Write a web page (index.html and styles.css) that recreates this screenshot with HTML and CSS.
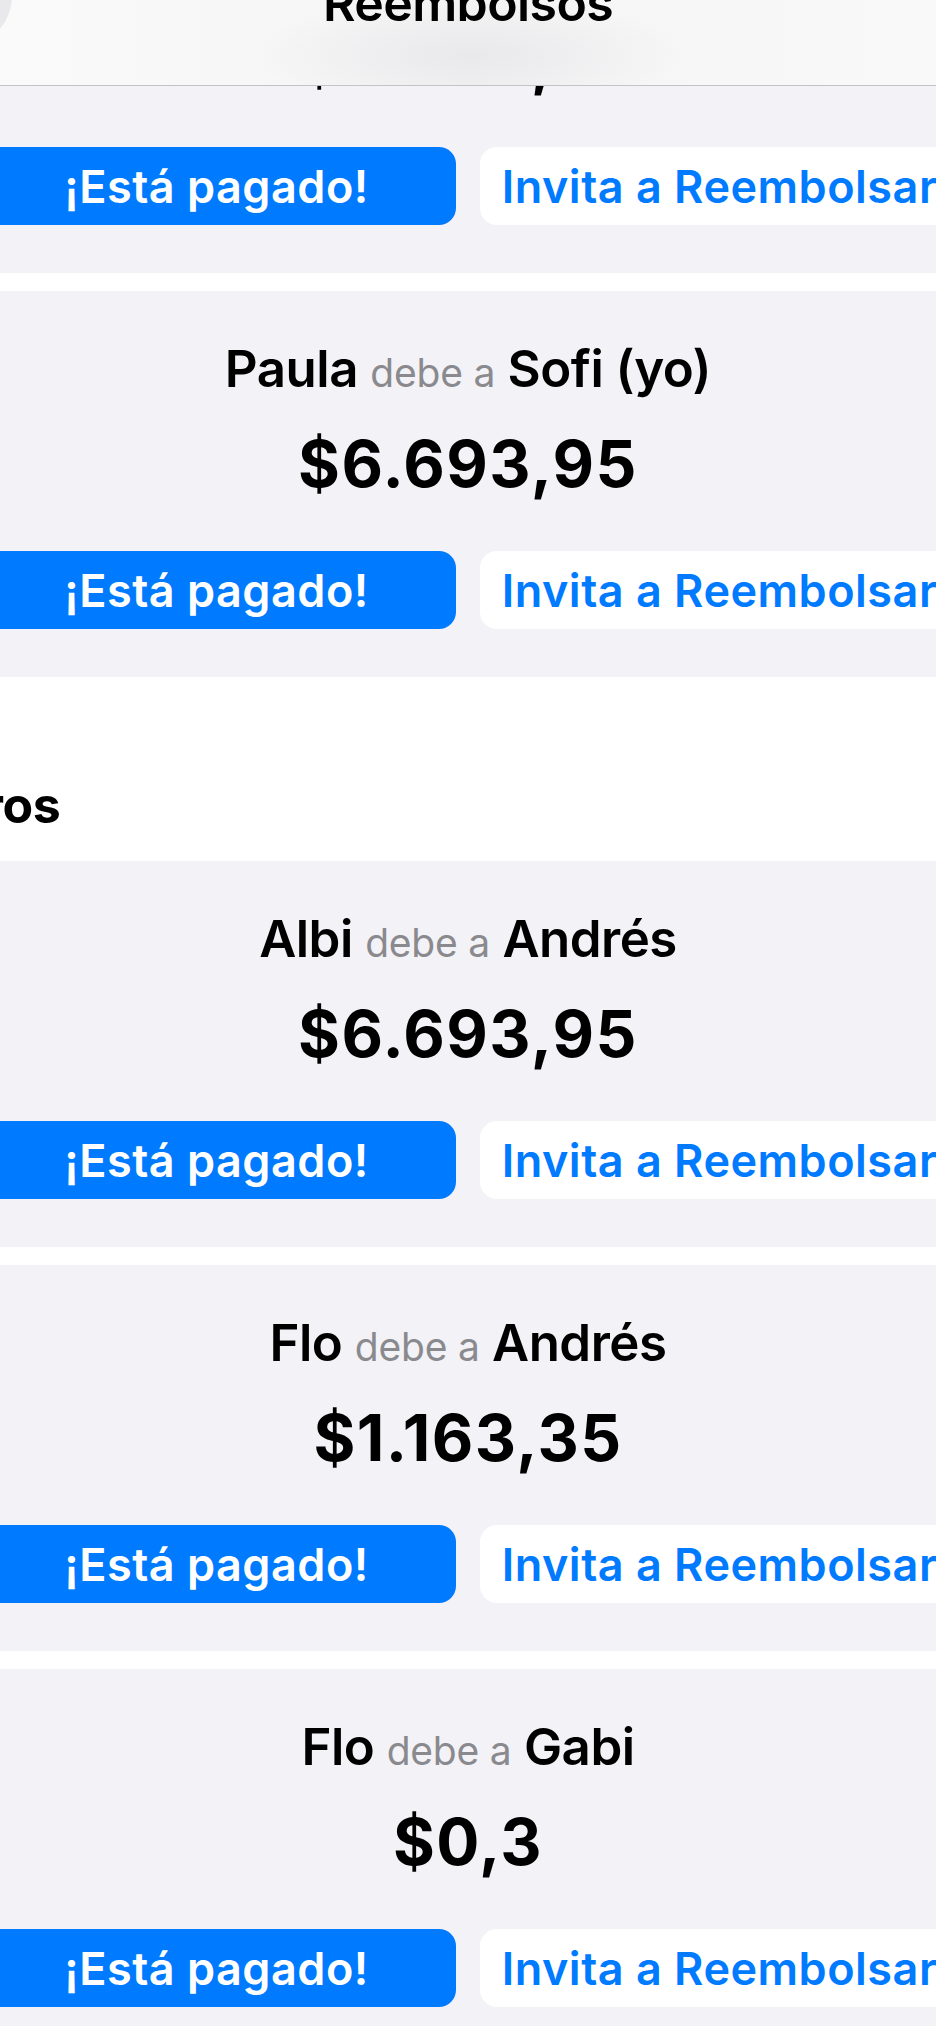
FILE: index.html
```html
<!DOCTYPE html>
<html lang="es">
<head>
<meta charset="utf-8">
<title>Reembolsos</title>
<link rel="stylesheet" href="styles.css">
</head>
<body>
<header class="navbar">
  <div class="nav-back"></div>
  <div class="nav-title">Reembolsos</div>
</header>
<main class="screen">
  <section class="card">
    <div class="debt-title"><span class="name">Paula</span> <span class="verb">debe a</span> <span class="name">Sofi (yo)</span></div>
    <div class="amount">$6.693,95</div>
    <div class="actions">
      <button class="btn btn-primary">¡Está pagado!</button>
      <button class="btn btn-secondary">Invita a Reembolsar</button>
    </div>
  </section>
  <section class="card">
    <div class="debt-title"><span class="name">Paula</span> <span class="verb">debe a</span> <span class="name">Sofi (yo)</span></div>
    <div class="amount">$6.693,95</div>
    <div class="actions">
      <button class="btn btn-primary">¡Está pagado!</button>
      <button class="btn btn-secondary">Invita a Reembolsar</button>
    </div>
  </section>
  <div class="section-head">
    <h2 class="section-title">Otros</h2>
  </div>
  <section class="card">
    <div class="debt-title"><span class="name">Albi</span> <span class="verb">debe a</span> <span class="name">Andrés</span></div>
    <div class="amount">$6.693,95</div>
    <div class="actions">
      <button class="btn btn-primary">¡Está pagado!</button>
      <button class="btn btn-secondary">Invita a Reembolsar</button>
    </div>
  </section>
  <section class="card">
    <div class="debt-title"><span class="name">Flo</span> <span class="verb">debe a</span> <span class="name">Andrés</span></div>
    <div class="amount">$1.163,35</div>
    <div class="actions">
      <button class="btn btn-primary">¡Está pagado!</button>
      <button class="btn btn-secondary">Invita a Reembolsar</button>
    </div>
  </section>
  <section class="card">
    <div class="debt-title"><span class="name">Flo</span> <span class="verb">debe a</span> <span class="name">Gabi</span></div>
    <div class="amount">$0,3</div>
    <div class="actions">
      <button class="btn btn-primary">¡Está pagado!</button>
      <button class="btn btn-secondary">Invita a Reembolsar</button>
    </div>
  </section>
</main>
</body>
</html>
```
FILE: styles.css
```css
html, body {
  margin: 0;
  padding: 0;
  background: #ffffff;
  overflow: hidden;
}
body {
  width: 936px;
  height: 2026px;
  position: relative;
  font-family: "Inter", "Noto Sans", sans-serif;
  color: #000;
}
.navbar {
  position: fixed;
  top: 0;
  left: 0;
  width: 936px;
  height: 85px;
  border-bottom: 1px solid #c3c3c7;
  background:
    radial-gradient(ellipse 220px 55px at 470px 55px, rgba(232, 232, 234, 0.9), rgba(240, 240, 242, 0) 100%),
    linear-gradient(90deg, #fafafb 0%, #f6f6f7 35%, #f3f3f4 50%, #f6f6f7 65%, #f9f9fa 100%);
  z-index: 10;
  display: flex;
  justify-content: center;
  overflow: hidden;
}
.nav-back {
  position: absolute;
  left: -90px;
  top: -55px;
  width: 102px;
  height: 102px;
  border-radius: 50%;
  background: #e9e9eb;
}
.nav-title {
  position: relative;
  margin-top: -27px;
  font-size: 50px;
  line-height: 60px;
  font-weight: 600;
  letter-spacing: -0.6px;
}
.screen {
  width: 1170px;
  margin-left: -117px;
  margin-top: -113px;
  display: flex;
  flex-direction: column;
  gap: 18px;
  background: #ffffff;
}
.card {
  background: #f2f2f7;
  padding: 48px 94px 48px;
  display: flex;
  flex-direction: column;
  align-items: center;
}
.debt-title {
  font-size: 51px;
  line-height: 60px;
  height: 60px;
  font-weight: 600;
  letter-spacing: -0.5px;
  white-space: nowrap;
}
.verb {
  font-size: 39px;
  line-height: 1;
  font-weight: 400;
  color: #8a8a8e;
  letter-spacing: -0.2px;
}
.amount {
  margin-top: 25px;
  font-size: 64px;
  line-height: 80px;
  height: 80px;
  font-weight: 700;
  letter-spacing: 1.4px;
}
.actions {
  margin-top: 47px;
  width: 100%;
  display: flex;
  gap: 24px;
}
.btn {
  flex: 1;
  height: 78px;
  border: none;
  border-radius: 17px;
  font-family: inherit;
  font-size: 45px;
  font-weight: 600;
  letter-spacing: 0.5px;
  display: flex;
  align-items: center;
  justify-content: center;
  padding: 0;
  white-space: nowrap;
}
.btn-primary {
  background: #007aff;
  color: #ffffff;
}
.btn-secondary {
  background: #ffffff;
  color: #007aff;
}
.section-head {
  padding: 98px 0 8px 45px;
  margin-top: -18px;
  background: #fff;
}
.section-title {
  margin: 0;
  font-size: 50px;
  line-height: 60px;
  font-weight: 700;
  letter-spacing: -0.5px;
}
```
